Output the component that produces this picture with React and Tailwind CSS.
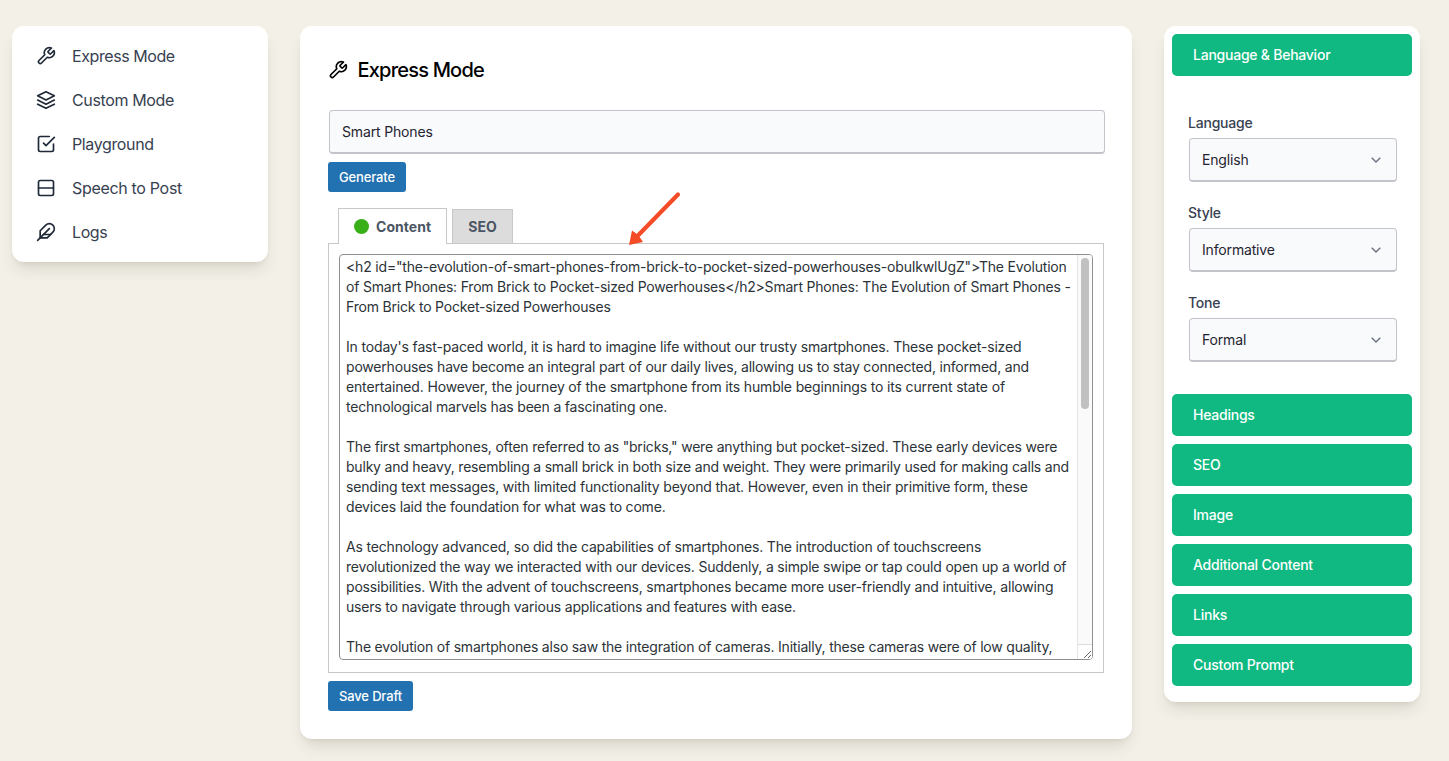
const iconPaths = {
  tool: (
    <path d="M14.7 6.3a1 1 0 0 0 0 1.4l1.6 1.6a1 1 0 0 0 1.4 0l3.77-3.77a6 6 0 0 1-7.94 7.94l-6.91 6.91a2.12 2.12 0 0 1-3-3l6.91-6.91a6 6 0 0 1 7.94-7.94l-3.76 3.76z" />
  ),
  layers: (
    <>
      <polygon points="12 2 2 7 12 12 22 7 12 2" />
      <polyline points="2 17 12 22 22 17" />
      <polyline points="2 12 12 17 22 12" />
    </>
  ),
  check: (
    <>
      <polyline points="9 11 12 14 22 4" />
      <path d="M21 12v7a2 2 0 0 1-2 2H5a2 2 0 0 1-2-2V5a2 2 0 0 1 2-2h11" />
    </>
  ),
  rows: (
    <>
      <rect x="3" y="3" width="18" height="18" rx="2" />
      <line x1="3" y1="12" x2="21" y2="12" />
    </>
  ),
  feather: (
    <>
      <path d="M20.24 12.24a6 6 0 0 0-8.49-8.49L5 10.5V19h8.5z" />
      <line x1="16" y1="8" x2="2" y2="22" />
      <line x1="17.5" y1="15" x2="9" y2="15" />
    </>
  ),
};

function Icon({ name, className = "" }) {
  return (
    <svg
      viewBox="0 0 24 24"
      fill="none"
      stroke="currentColor"
      strokeWidth="2"
      strokeLinecap="round"
      strokeLinejoin="round"
      className={`size-5 shrink-0 ${className}`}
    >
      {iconPaths[name]}
    </svg>
  );
}

const nav = [
  ["tool", "Express Mode", "tracking-[-0.42px]"],
  ["layers", "Custom Mode", "tracking-[-0.36px]"],
  ["check", "Playground", "tracking-[-0.37px]"],
  ["rows", "Speech to Post", "tracking-[-0.32px]"],
  ["feather", "Logs", "tracking-[-0.4px]"],
];

const lines = [
  ['<h2 id="the-evolution-of-smart-phones-from-brick-to-pocket-sized-powerhouses-obuIkwlUgZ">The Evolution', "tracking-[-0.18px]"],
  ["of Smart Phones: From Brick to Pocket-sized Powerhouses</h2>Smart Phones: The Evolution of Smart Phones -", "tracking-[-0.2px]"],
  ["From Brick to Pocket-sized Powerhouses", "tracking-[-0.2px]"],
  ["", ""],
  ["In today's fast-paced world, it is hard to imagine life without our trusty smartphones. These pocket-sized", "tracking-[-0.167px]"],
  ["powerhouses have become an integral part of our daily lives, allowing us to stay connected, informed, and", "tracking-[-0.195px]"],
  ["entertained. However, the journey of the smartphone from its humble beginnings to its current state of", "tracking-[-0.155px]"],
  ["technological marvels has been a fascinating one.", "tracking-[-0.19px]"],
  ["", ""],
  ['The first smartphones, often referred to as "bricks," were anything but pocket-sized. These early devices were', "tracking-[-0.19px]"],
  ["bulky and heavy, resembling a small brick in both size and weight. They were primarily used for making calls and", "tracking-[-0.2px]"],
  ["sending text messages, with limited functionality beyond that. However, even in their primitive form, these", "tracking-[-0.16px]"],
  ["devices laid the foundation for what was to come.", "tracking-[-0.19px]"],
  ["", ""],
  ["As technology advanced, so did the capabilities of smartphones. The introduction of touchscreens", "tracking-[-0.173px]"],
  ["revolutionized the way we interacted with our devices. Suddenly, a simple swipe or tap could open up a world of", "tracking-[-0.198px]"],
  ["possibilities. With the advent of touchscreens, smartphones became more user-friendly and intuitive, allowing", "tracking-[-0.173px]"],
  ["users to navigate through various applications and features with ease.", "tracking-[-0.193px]"],
  ["", ""],
  ["The evolution of smartphones also saw the integration of cameras. Initially, these cameras were of low quality,", "tracking-[-0.2px]"],
];

const card = "rounded-xl bg-white shadow-[0_10px_15px_-3px_rgba(60,50,20,0.12),0_4px_6px_-4px_rgba(60,50,20,0.12)]";
const field = "flex h-11 items-center rounded-[4px] border border-b-2 border-[#c3c4ca] bg-[#f9fafc] text-sm tracking-[-0.16px] text-[#1f2430]";

function SelectField({ label, value }) {
  return (
    <div>
      <div className="mb-[5px] h-5 pl-4 text-sm leading-5 font-medium tracking-[-0.22px] text-[#374151]">{label}</div>
      <div className={`${field} mr-[15px] ml-[17px] justify-between pr-[15px] pl-3`}>
        <span>{value}</span>
        <svg viewBox="0 0 10 6" className="h-1.5 w-2.5" fill="none" stroke="#6b7280" strokeWidth="1.4">
          <path d="M0.7 0.7 5 5 9.3 0.7" />
        </svg>
      </div>
    </div>
  );
}

function Section({ children }) {
  return (
    <div className="flex h-[42px] items-center rounded-[5px] bg-[#10b981] pl-[21px] text-sm font-medium tracking-[-0.24px] text-white">
      {children}
    </div>
  );
}

function Button({ children, className }) {
  return (
    <button className={`flex h-[30px] items-center justify-center rounded-[3px] bg-[#2271b1] pt-px text-[13px] font-medium tracking-[-0.15px] whitespace-nowrap text-white ${className}`}>
      {children}
    </button>
  );
}

export default function App() {
  return (
    <div className="flex h-[761px] w-[1449px] items-start overflow-hidden bg-[#f3f0e8] pt-[26px] pl-3 font-['Inter','Liberation_Sans',sans-serif]">
      <nav className={`${card} w-64 py-2`}>
        {nav.map(([icon, label, tracking]) => (
          <div key={label} className="flex h-11 items-center gap-4 pl-6 text-[#1f2937]">
            <Icon name={icon} />
            <span className={`text-base text-[#374151] ${tracking}`}>{label}</span>
          </div>
        ))}
      </nav>

      <main className={`${card} ml-8 h-[713px] w-[832px] pt-7 pl-7`}>
        <h1 className="flex h-8 items-center gap-[9.5px] text-xl font-medium tracking-[-0.8px] text-black">
          <Icon name="tool" />
          Express Mode
        </h1>
        <div className={`${field} mt-6 ml-px w-[776px] pl-3`}>Smart Phones</div>
        <Button className="mt-2 w-[78px]">Generate</Button>

        <div className="mt-4 flex h-9 items-end gap-[5px] pl-2.5 text-sm font-bold text-[#4b5563]">
          <div className="relative z-10 flex h-9 w-[109px] items-center gap-[7px] border border-b-0 border-[#c8c8c8] bg-white pt-px pl-[15px]">
            <span className="mb-px size-[15px] rounded-full bg-[#38ae19]" />
            <span className="tracking-[0.05px]">Content</span>
          </div>
          <div className="flex h-[35px] w-[61px] items-center justify-center border border-[#c8c8c8] bg-[#dcdcdc]">SEO</div>
        </div>

        <div className="relative -mt-px h-[430px] w-[776px] border border-[#c8c8c8] p-2.5">
          <div className="flex h-[406px] w-[754px] overflow-hidden rounded-[4px] border border-[#8c8f94] bg-white">
            <div className="w-[737px] shrink-0 overflow-hidden pt-0.5 pl-1.5 text-sm leading-5 whitespace-pre text-[#2c3338]">
              {lines.map(([text, tracking], i) => (
                <div key={i} className="h-5">
                  <span className={tracking}>{text}</span>
                </div>
              ))}
            </div>
            <div className="flex w-[15px] flex-col justify-between border-l border-[#e5e5e5] bg-[#fafafa]">
              <div className="mt-[3px] ml-[3px] h-[151px] w-2 rounded-full bg-[#c1c1c1]" />
              <div className="flex h-[15px] items-end justify-end border-t border-[#dcdcdc] bg-white">
                <svg viewBox="0 0 9 9" className="size-[9px]" stroke="#555" strokeWidth="0.9">
                  <path d="M1 8 8 1M5 8 8 5" />
                </svg>
              </div>
            </div>
          </div>
          <svg viewBox="0 0 56 56" className="absolute -top-[53px] left-[297px] size-14">
            <path d="M52 3.5 11 45.5" stroke="#f54c27" strokeWidth="4.2" strokeLinecap="round" />
            <path d="M3 54 6 39.5 9.5 42 14 46.5 17 51Z" fill="#f54c27" strokeLinejoin="round" />
          </svg>
        </div>
        <Button className="mt-2 w-[85px]">Save Draft</Button>
      </main>

      <aside className={`${card} ml-8 h-[676px] w-64 p-2`}>
        <Section>Language &amp; Behavior</Section>
        <div className="mt-[37px] mb-8 flex flex-col gap-[21px]">
          <SelectField label="Language" value="English" />
          <SelectField label="Style" value="Informative" />
          <SelectField label="Tone" value="Formal" />
        </div>
        <div className="flex flex-col gap-2">
          <Section>Headings</Section>
          <Section>SEO</Section>
          <Section>Image</Section>
          <Section>Additional Content</Section>
          <Section>Links</Section>
          <Section>Custom Prompt</Section>
        </div>
      </aside>
    </div>
  );
}
